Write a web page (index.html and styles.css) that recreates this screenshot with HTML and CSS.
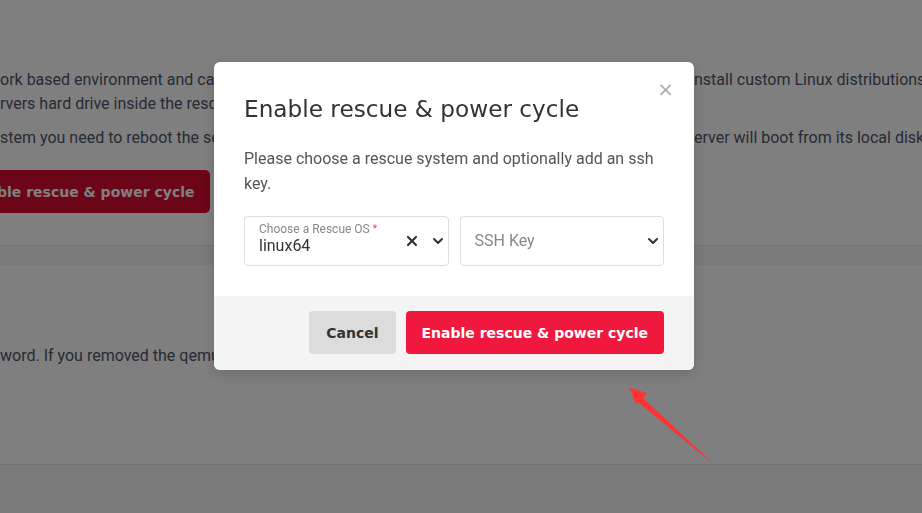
FILE: index.html
```html
<!DOCTYPE html>
<html lang="en">
<head>
<meta charset="utf-8">
<title>Enable rescue &amp; power cycle</title>
<link rel="stylesheet" href="styles.css">
</head>
<body>
<main class="page">
  <section class="card card-rescue">
    <div class="line">
      <span class="seg-left">ork based environment and can be used to fix issues</span>
      <span class="seg-right">nstall custom Linux distributions.</span>
    </div>
    <div class="line">
      <span class="seg-left">rvers hard drive inside the rescue system to repair</span>
    </div>
    <div class="line para">
      <span class="seg-left">stem you need to reboot the server after enabling it</span>
      <span class="seg-right">erver will boot from its local disk.</span>
    </div>
    <button class="btn btn-primary btn-bg">Enable rescue &amp; power cycle</button>
  </section>
  <section class="card card-second">
    <div class="line">
      <span class="seg-left">word. If you removed the qemu guest agent from your server</span>
    </div>
  </section>
</main>

<div class="backdrop">
  <div class="modal" role="dialog">
    <button class="close" aria-label="Close">&times;</button>
    <header class="modal-header">
      <h2 class="modal-title">Enable rescue &amp; power cycle</h2>
    </header>
    <div class="modal-body">
      <p class="intro">Please choose a rescue system and optionally add an ssh key.</p>
      <div class="fields">
        <div class="select select-filled">
          <div class="select-value">
            <span class="select-label">Choose a Rescue OS <span class="req">*</span></span>
            <span class="select-text">linux64</span>
          </div>
          <svg class="icon-clear" width="12" height="12" viewBox="0 0 12 12"><path d="M2 2 L10 10 M10 2 L2 10" stroke="#333" stroke-width="2.2" stroke-linecap="round"/></svg>
          <svg class="icon-chev" width="12" height="8" viewBox="0 0 12 8"><path d="M2 2 L6 6 L10 2" fill="none" stroke="#333" stroke-width="2" stroke-linecap="round" stroke-linejoin="round"/></svg>
        </div>
        <div class="select">
          <div class="select-value">
            <span class="select-placeholder">SSH Key</span>
          </div>
          <svg class="icon-chev" width="12" height="8" viewBox="0 0 12 8"><path d="M2 2 L6 6 L10 2" fill="none" stroke="#333" stroke-width="2" stroke-linecap="round" stroke-linejoin="round"/></svg>
        </div>
      </div>
    </div>
    <footer class="modal-footer">
      <button class="btn btn-cancel">Cancel</button>
      <button class="btn btn-primary">Enable rescue &amp; power cycle</button>
    </footer>
  </div>
</div>

<svg class="annot-arrow" width="110" height="100" viewBox="620 378 110 100">
  <polygon points="629.5,387.5 647.5,393.5 643,398 715,465.5 638.5,402.5 636,404.5" fill="#ff3333"/>
</svg>
</body>
</html>
```
FILE: styles.css
```css
* { box-sizing: border-box; }

html, body {
  margin: 0;
  padding: 0;
  width: 922px;
  height: 513px;
  overflow: hidden;
  background: #f4f4f4;
  font-family: Roboto, "Liberation Sans", sans-serif;
}

.page {
  display: flex;
  flex-direction: column;
  gap: 19px;
}

.card {
  background: #ffffff;
  border-bottom: 1px solid #e4e4e4;
  color: #50556a;
  font-size: 16px;
}

.card-rescue {
  padding: 68px 0 32px;
  display: flex;
  flex-direction: column;
}

.card-second {
  height: 200px;
  padding-top: 79px;
}

.line {
  display: grid;
  grid-template-columns: 214px 480px auto;
  white-space: nowrap;
  line-height: 24px;
  height: 24px;
}

.line.para { margin-top: 10px; }

.seg-left {
  grid-column: 1;
  overflow: hidden;
}

.seg-right { grid-column: 3; }

.btn {
  height: 43px;
  border: 0;
  border-radius: 4px;
  padding: 0 16px;
  font-family: "DejaVu Sans", sans-serif;
  font-weight: 700;
  font-size: 14px;
  cursor: pointer;
}

.btn-primary {
  background: #f0183c;
  color: #ffffff;
}

.btn-bg {
  background: #d90a30;
  align-self: flex-start;
  margin-top: 20px;
  margin-left: -48px;
  border-radius: 5px;
}

.btn-cancel {
  background: #dcdcdc;
  color: #333333;
  padding: 0 17px;
}

/* modal */
.backdrop {
  position: fixed;
  inset: 0;
  background: rgba(0, 0, 0, 0.5);
  padding: 62px 0 0 214px;
}

.modal {
  position: relative;
  width: 480px;
  background: #ffffff;
  border-radius: 6px;
  overflow: hidden;
  box-shadow: 0 4px 14px rgba(0, 0, 0, 0.15);
}

.close {
  position: absolute;
  top: 15px;
  right: 20px;
  border: 0;
  background: none;
  padding: 0;
  font-family: "DejaVu Sans", sans-serif;
  font-size: 20px;
  line-height: 24px;
  color: #aaaaaa;
}

.modal-header {
  padding: 31px 30px 0;
}

.modal-title {
  margin: 0;
  font-family: "DejaVu Sans", sans-serif;
  font-weight: 400;
  font-size: 23.2px;
  line-height: 32px;
  color: #333333;
}

.modal-body {
  padding: 21px 30px 30px;
}

.intro {
  margin: 0 0 20px;
  font-size: 16px;
  line-height: 25px;
  color: #555555;
}

.fields {
  display: flex;
  gap: 11px;
}

.select {
  flex: 1;
  height: 50px;
  border: 1px solid #dddddd;
  border-radius: 4px;
  display: flex;
  align-items: center;
  padding: 0 4px 0 14px;
  gap: 14px;
}

.select-value {
  flex: 1;
  display: flex;
  flex-direction: column;
}

.select-filled .select-value { margin-top: -4px; }

.select-label {
  font-size: 12px;
  line-height: 14px;
  color: #888888;
}

.req { color: #e8485f; font-size: 10px; vertical-align: top; }

.select-text {
  font-size: 16px;
  line-height: 20px;
  color: #333333;
}

.select-placeholder {
  font-size: 16px;
  line-height: 20px;
  color: #888888;
}

.modal-footer {
  background: #f4f4f4;
  display: flex;
  justify-content: flex-end;
  gap: 10px;
  padding: 15px 30px 16px;
}

.annot-arrow {
  position: absolute;
  left: 620px;
  top: 378px;
}
```
